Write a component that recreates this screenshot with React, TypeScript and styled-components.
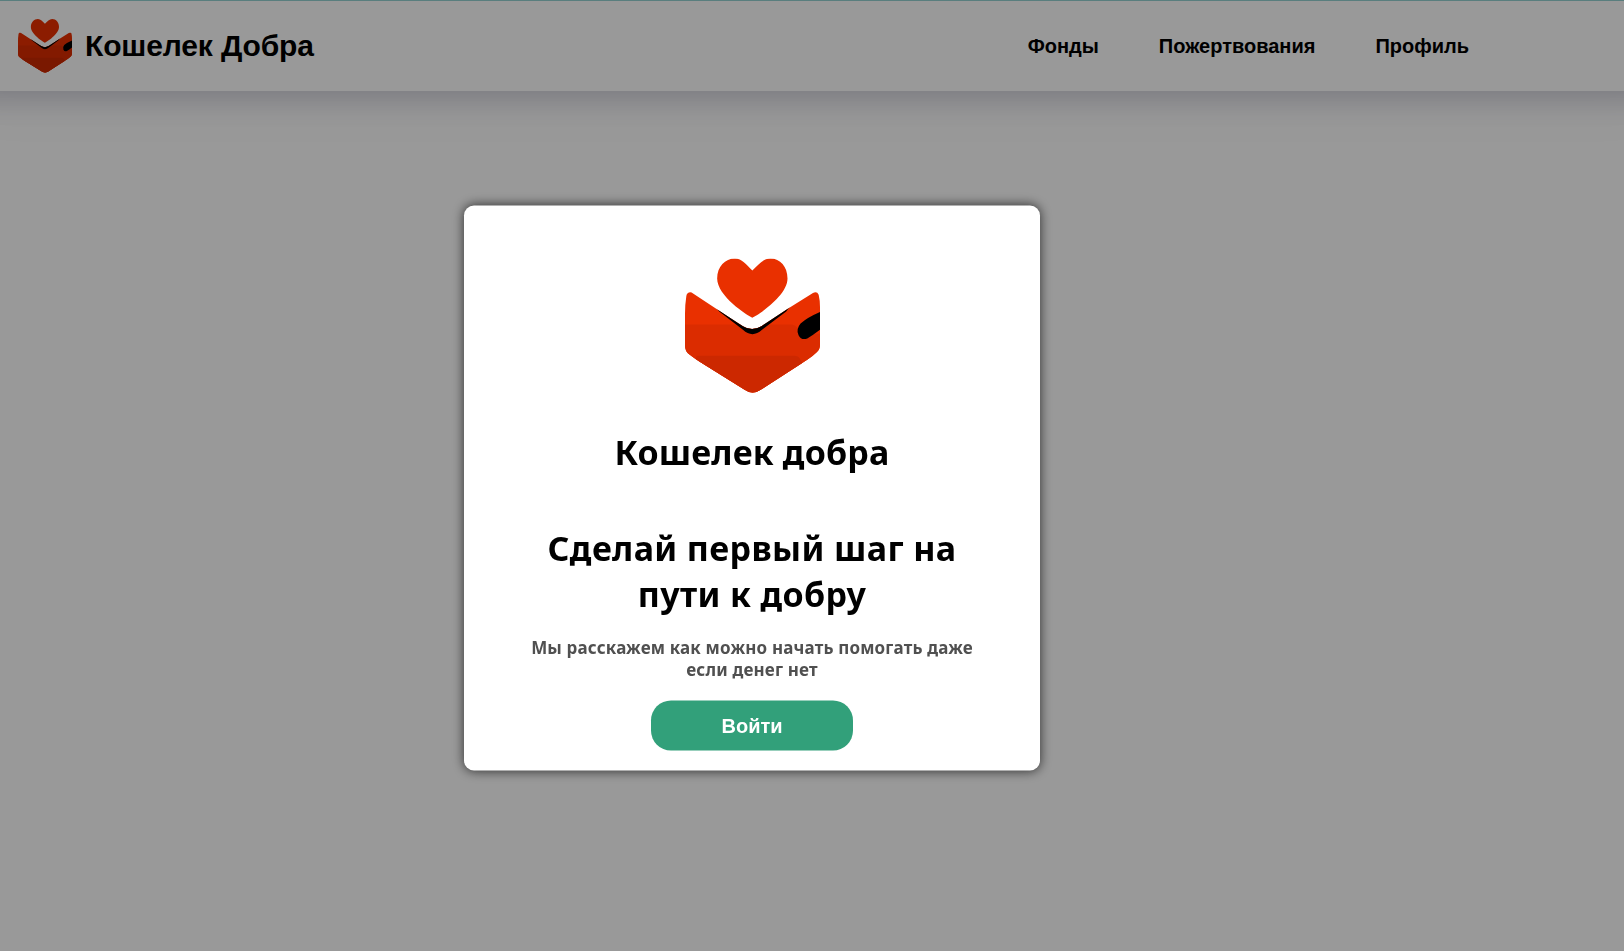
import React from 'react';
import styled, { createGlobalStyle } from 'styled-components';

const GlobalStyle = createGlobalStyle`
  * { box-sizing: border-box; }
  body { margin: 0; background: #fff; font-family: "Noto Sans", sans-serif; overflow: hidden; }
  h1, h2, p { margin: 0; }
`;

const Page = styled.div`
  min-height: 951px;
  background: #fff;
`;

const Header = styled.header`
  display: flex;
  align-items: center;
  justify-content: space-between;
  height: 91px;
  padding: 0 155px 1px 18px;
  border-top: 1px solid #94d2d2;
  background: #fff;
  box-shadow: 0 -22px 27px 30px rgba(50, 50, 93, 0.23), 0 0 50px 30px rgba(0, 0, 0, 0.02);
  font-family: "Liberation Sans", Arial, sans-serif;
`;

const Brand = styled.div`
  display: flex;
  align-items: center;
  gap: 13px;
`;

const BrandName = styled.span`
  font-size: 30px;
  font-weight: 700;
  line-height: 34px;
  letter-spacing: -0.14px;
  color: #000;
`;

const Nav = styled.nav`
  display: flex;
  gap: 60px;
`;

const NavLink = styled.a`
  font-size: 20px;
  font-weight: 700;
  line-height: 24px;
  color: #000;
  text-decoration: none;
`;

const Overlay = styled.div`
  position: fixed;
  inset: 0;
  padding: 205px 0 0 464px;
  background: rgba(0, 0, 0, 0.4);
`;

const Dialog = styled.section`
  display: flex;
  flex-direction: column;
  align-items: center;
  width: 576px;
  height: 565px;
  padding-top: 53px;
  border-radius: 10px;
  background: #fff;
  box-shadow: 0 0 12px rgba(0, 0, 0, 0.7);
  text-align: center;
  transform: translateY(0.5px);
`;

const Title = styled.h1`
  margin-top: 35px;
  font-size: 34px;
  font-weight: 700;
  line-height: 46px;
  letter-spacing: 0.17px;
  color: #000;
`;

const Heading = styled.h2`
  width: 450px;
  margin-top: 50px;
  font-size: 34px;
  font-weight: 700;
  line-height: 46px;
  letter-spacing: 0.37px;
  color: #000;
`;

const Note = styled.p`
  width: 450px;
  margin-top: 20px;
  font-size: 17px;
  font-weight: 700;
  line-height: 22px;
  letter-spacing: 0.17px;
  color: #505050;
`;

const Button = styled.button`
  width: 202px;
  height: 50px;
  margin-top: 20px;
  padding: 0;
  border: 0;
  border-radius: 20px;
  background: #32a07a;
  color: #fff;
  font: 700 20px "Liberation Sans", Arial, sans-serif;
`;

const LogoSvg = styled.svg`
  display: block;
  flex: none;
`;

const Logo = ({ size }: { size: number }) => (
  <LogoSvg width={size} height={size} viewBox="0 0 403 403" aria-hidden="true">
    <defs>
      <clipPath id={`wallet${size}`}>
        <path d="M16 101Q6 101 4 112Q0 138 0 165V260Q0 277 12 286Q26 297 45 309L178 392Q202 409 226 392L365 302Q382 291 394 279Q403 271 403 257V145Q403 124 399 108Q394 97 382 103L308 149L228 202Q200 219 173 202L92 149L23 104Q20 101 16 101Z" />
      </clipPath>
    </defs>
    <path
      fill="#e93000"
      d="M201 177C185 170 96 112 96 60C96 24 120 0 149 0C170 0 182 17 201 36C220 17 234 0 255 0C284 0 306 24 306 60C306 112 217 170 201 177Z"
    />
    <g clipPath={`url(#wallet${size})`}>
      <path fill="#e93000" d="M0 90H403V403H0Z" />
      <path fill="#db2c00" d="M0 197H313Q332 197 338 212L350 225H403V403H0Z" />
      <path fill="#cc2800" d="M35 290H325Q341 290 345 303L403 403H0Z" />
      <path fill="#000" d="M88 140L150 176L201 200L250 178L316 140L302 158L230 213Q201 239 173 213L102 158Z" />
      <path fill="#000" d="M403 160Q366 176 345 194Q330 212 339 229Q347 245 365 239Q382 229 403 213Z" />
    </g>
  </LogoSvg>
);

const links = ['Фонды', 'Пожертвования', 'Профиль'];

export default function App() {
  return (
    <>
      <GlobalStyle />
      <Page>
        <Header>
          <Brand>
            <Logo size={54} />
            <BrandName>Кошелек Добра</BrandName>
          </Brand>
          <Nav>
            {links.map((label) => (
              <NavLink key={label}>{label}</NavLink>
            ))}
          </Nav>
        </Header>
      </Page>
      <Overlay>
        <Dialog role="dialog">
          <Logo size={135} />
          <Title>Кошелек добра</Title>
          <Heading>Сделай первый шаг на пути к добру</Heading>
          <Note>Мы расскажем как можно начать помогать даже если денег нет</Note>
          <Button>Войти</Button>
        </Dialog>
      </Overlay>
    </>
  );
}
